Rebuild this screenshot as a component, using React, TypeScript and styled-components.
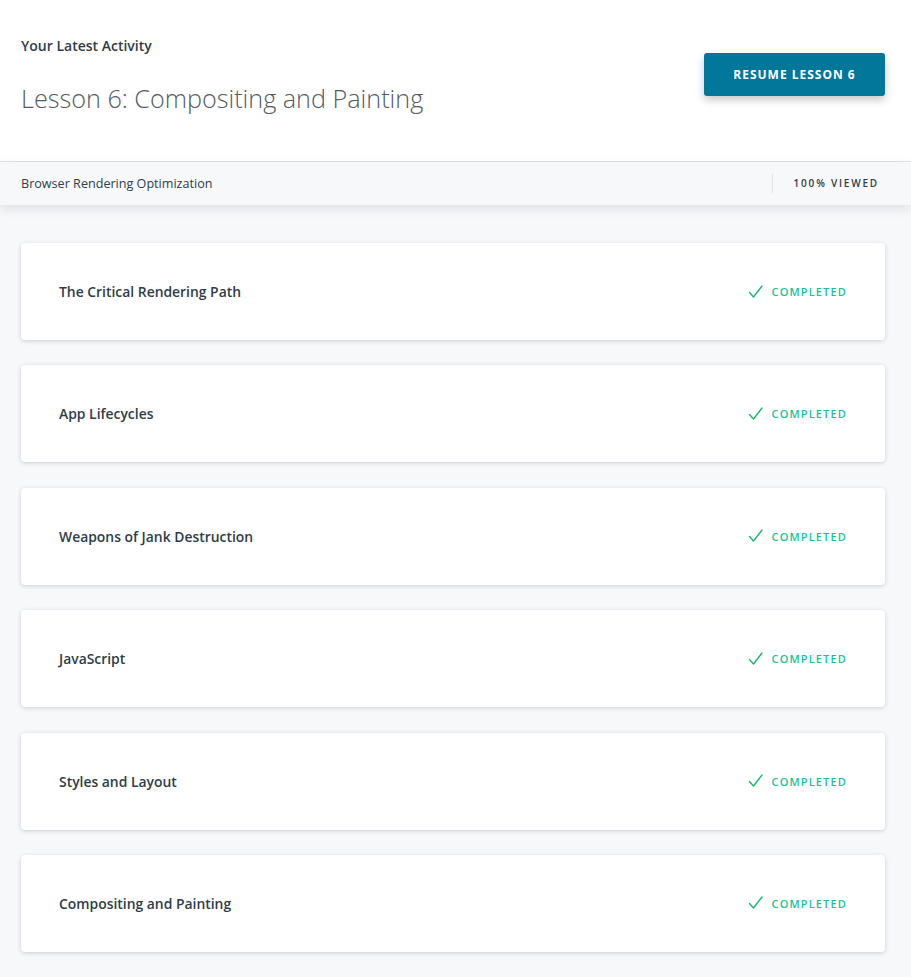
import styled, { createGlobalStyle } from "styled-components";

const GlobalStyle = createGlobalStyle`
  body {
    margin: 0;
    background: #f7f8fa;
    font-family: "Open Sans", "Liberation Sans", sans-serif;
    color: #2e3d49;
  }
`;

const Page = styled.div`
  min-height: 977px;
  background: #f7f8fa;
`;

const Header = styled.header`
  background: #ffffff;
  display: flex;
  justify-content: space-between;
  align-items: flex-start;
  padding: 37px 26px 0 21px;
  height: 162px;
  box-sizing: border-box;
  border-bottom: 1px solid #dbe2e8;
`;

const Kicker = styled.h4`
  margin: 0;
  font-size: 14px;
  font-weight: 600;
  line-height: 18px;
  color: #2e3d49;
`;

const Title = styled.h1`
  margin: 25px 0 0;
  font-size: 25.2px;
  font-weight: 300;
  line-height: 36px;
  color: #525c65;
`;

const ResumeButton = styled.button`
  margin-top: 16px;
  width: 181px;
  height: 43px;
  border: none;
  border-radius: 3px;
  background: #02779a;
  color: #ffffff;
  font-family: inherit;
  font-size: 12px;
  font-weight: 700;
  letter-spacing: 1px;
  box-shadow: 0 4px 8px rgba(0, 0, 0, 0.22);
  cursor: pointer;
`;

const SubBar = styled.div`
  height: 43px;
  display: flex;
  align-items: center;
  justify-content: space-between;
  padding: 0 32px 0 21px;
  background: #f7f8fa;
  box-shadow: 0 4px 10px rgba(46, 61, 73, 0.12);
  position: relative;
`;

const CourseName = styled.span`
  font-size: 12.6px;
  color: #2e3d49;
`;

const Viewed = styled.span`
  border-left: 1px solid #dbe2e8;
  padding-left: 21px;
  line-height: 19px;
  font-size: 10px;
  font-weight: 600;
  letter-spacing: 1.8px;
  color: #2e3d49;
`;

const List = styled.div`
  display: flex;
  flex-direction: column;
  gap: 25.4px;
  padding: 38px 26px 0 21px;
`;

const Card = styled.div`
  height: 97px;
  background: #ffffff;
  border-radius: 4px;
  box-shadow: 0 1px 4px rgba(46, 61, 73, 0.22);
  display: flex;
  align-items: center;
  justify-content: space-between;
  padding: 0 38px;
`;

const LessonName = styled.span`
  font-size: 13.9px;
  font-weight: 600;
  color: #2e3d49;
`;

const Status = styled.span`
  display: flex;
  align-items: center;
  gap: 8px;
  font-size: 11px;
  font-weight: 600;
  letter-spacing: 1.15px;
  color: #15c39a;
`;

const lessons = [
  "The Critical Rendering Path",
  "App Lifecycles",
  "Weapons of Jank Destruction",
  "JavaScript",
  "Styles and Layout",
  "Compositing and Painting",
];

function Check() {
  return (
    <svg width="16" height="16" viewBox="0 0 16 16">
      <path d="M1.5 8.5 L5.5 13 L14 2" fill="none" stroke="#1db86c" strokeWidth="1.4" strokeLinecap="round" strokeLinejoin="round" />
    </svg>
  );
}

export default function App() {
  return (
    <Page>
      <GlobalStyle />
      <Header>
        <div>
          <Kicker>Your Latest Activity</Kicker>
          <Title>Lesson 6: Compositing and Painting</Title>
        </div>
        <ResumeButton>RESUME LESSON 6</ResumeButton>
      </Header>
      <SubBar>
        <CourseName>Browser Rendering Optimization</CourseName>
        <Viewed>100% VIEWED</Viewed>
      </SubBar>
      <List>
        {lessons.map((l) => (
          <Card key={l}>
            <LessonName>{l}</LessonName>
            <Status>
              <Check />
              COMPLETED
            </Status>
          </Card>
        ))}
      </List>
    </Page>
  );
}
